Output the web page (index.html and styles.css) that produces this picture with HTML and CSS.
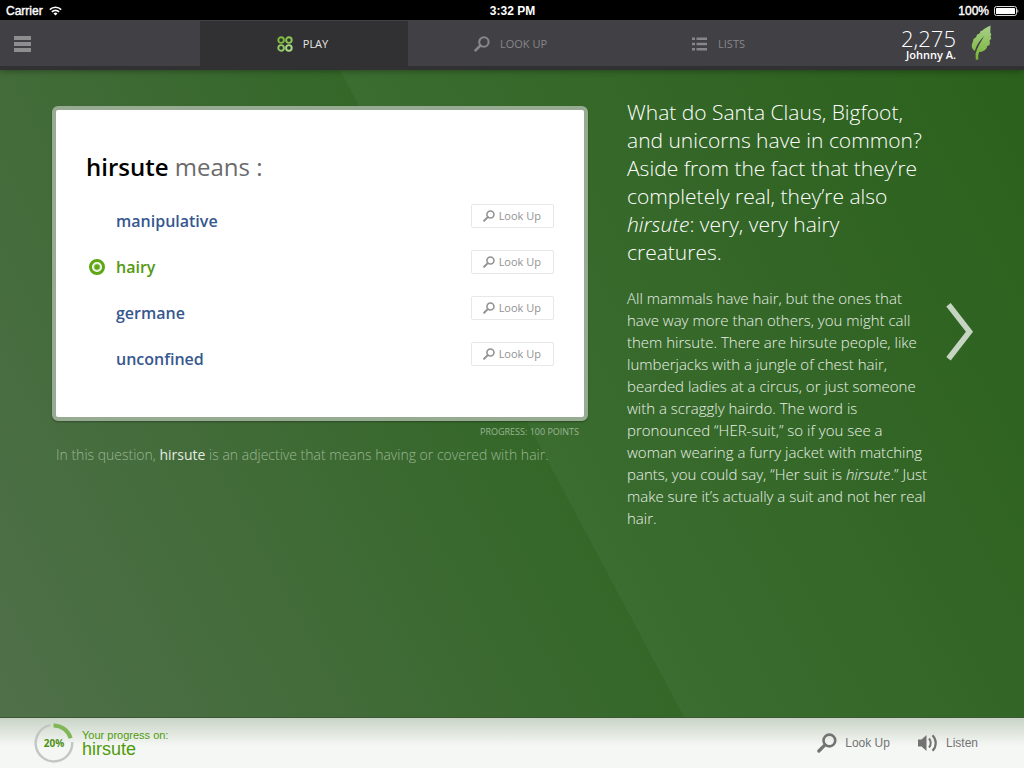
FILE: index.html
```html
<!DOCTYPE html>
<html lang="en">
<head>
<meta charset="utf-8">
<meta name="viewport" content="width=device-width, initial-scale=1">
<title>Vocabulary – hirsute</title>
<link rel="stylesheet" href="styles.css">
</head>
<body>
<svg class="defs" width="0" height="0" aria-hidden="true">
  <symbol id="magnifier" viewBox="0 0 16 16">
    <circle cx="9.9" cy="6" r="4.7" fill="none" stroke="currentColor" stroke-width="2.1"/>
    <path d="M6.4 9.5 1.5 14.4" fill="none" stroke="currentColor" stroke-width="2.6" stroke-linecap="round"/>
  </symbol>
</svg>
<div class="app">
  <div class="status">
    <span class="status-left">Carrier
      <svg width="13" height="10" viewBox="0 0 13 10" fill="none" stroke="#fff" stroke-width="1.6"><path d="M.8 3.6a8.2 8.2 0 0 1 11.4 0M2.9 5.9a5.1 5.1 0 0 1 7.2 0"/><path d="M6.5 9.6 4.5 7.5a2.9 2.9 0 0 1 4 0z" fill="#fff" stroke="none"/></svg>
    </span>
    <span class="status-time">3:32 PM</span>
    <span class="status-right">100%
      <svg width="25" height="10" viewBox="0 0 25 10"><rect x=".5" y=".5" width="22" height="9" rx="2" fill="none" stroke="#ddd"/><rect x="2" y="2" width="19" height="6" rx=".6" fill="#fff"/><path d="M23.4 3.2c1.3.4 1.3 3.2 0 3.6z" fill="#ddd"/></svg>
    </span>
  </div>

  <header class="navbar">
    <button class="menu" type="button" aria-label="Menu">
      <svg width="17" height="16" viewBox="0 0 17 16" fill="#8e8e90"><path d="M0 0h17v4H0zM0 6h17v4H0zM0 12h17v4H0z"/></svg>
    </button>
    <nav class="tabs">
      <a class="tab tab-active" href="#play">
        <svg width="16" height="16" viewBox="0 0 16 16" fill="none" stroke-width="1.9"><circle cx="4.1" cy="4.1" r="2.8" stroke="#7cbc3a"/><circle cx="11.9" cy="4.1" r="2.8" stroke="#8cc653"/><circle cx="4.1" cy="11.9" r="2.8" stroke="#92cb62"/><circle cx="11.9" cy="11.9" r="2.8" stroke="#a9dc80"/></svg>
        Play</a>
      <a class="tab" href="#lookup"><svg width="16" height="16"><use href="#magnifier"/></svg>Look Up</a>
      <a class="tab" href="#lists">
        <svg width="16" height="14" viewBox="0 0 16 14" fill="currentColor"><path d="M0 .5h3v2.6H0zM0 5.7h3v2.6H0zM0 10.9h3v2.6H0zM4.500 .5h10.500v2.600H4.500zM4.500 5.700h10.500v2.600H4.500zM4.500 10.900h10.500v2.600H4.500z"/></svg>
        Lists</a>
    </nav>
    <div class="profile">
      <div class="score"><span class="points">2,275</span><span class="user">Johnny A.</span></div>
      <svg width="21" height="36" viewBox="0 0 21 36">
        <defs><linearGradient id="leaf" x1="0" y1="0" x2="0" y2="1"><stop offset="0" stop-color="#a9cf8d"/><stop offset="1" stop-color="#76b531"/></linearGradient></defs>
        <path fill="url(#leaf)" d="M19.500.5C16 2.200 13 3.500 11 5.800L9.500 6 8.800 8.200 6 9.800 5 12.300 2.500 14 1.800 17C.2 20.500.3 23.500 3.800 26 5.500 20 8.500 15.500 13.200 11 9.700 17.200 6.300 22 4.600 28.500L4.800 34.800 7.400 34.400C7 31.500 7.300 29 8.300 27 11.500 26.800 14.500 25.500 16 22.500L15.700 21.400 18.500 20 19 16.800 18.200 16 20.300 13.500 19.500 11.700 20.300 9.300 19.300 7.600Z"/>
      </svg>
    </div>
  </header>

  <main class="stage">
    <section class="question">
      <form class="card">
        <h1 class="prompt"><strong>hirsute</strong> means :</h1>
        <ul class="choices">
          <li class="choice"><label class="answer"><input class="radio" type="radio" name="answer">manipulative</label><button class="lookup" type="button"><svg width="12" height="12"><use href="#magnifier"/></svg>Look Up</button></li>
          <li class="choice"><label class="answer answer-right"><input class="radio" type="radio" name="answer" checked>hairy</label><button class="lookup" type="button"><svg width="12" height="12"><use href="#magnifier"/></svg>Look Up</button></li>
          <li class="choice"><label class="answer"><input class="radio" type="radio" name="answer">germane</label><button class="lookup" type="button"><svg width="12" height="12"><use href="#magnifier"/></svg>Look Up</button></li>
          <li class="choice"><label class="answer"><input class="radio" type="radio" name="answer">unconfined</label><button class="lookup" type="button"><svg width="12" height="12"><use href="#magnifier"/></svg>Look Up</button></li>
        </ul>
      </form>
      <p class="progress-note">Progress: 100 points</p>
      <p class="explain">In this question, <strong>hirsute</strong> is an adjective that means having or covered with hair.</p>
    </section>

    <article class="blurb">
      <p class="lead">What do Santa Claus, Bigfoot, and unicorns have in common? Aside from the fact that they’re completely real, they’re also <em>hirsute</em>: very, very hairy creatures.</p>
      <p class="detail">All mammals have hair, but the ones that have way more than others, you might call them hirsute. There are hirsute people, like lumberjacks with a jungle of chest hair, bearded ladies at a circus, or just someone with a scraggly hairdo. The word is pronounced “HER-suit,” so if you see a woman wearing a furry jacket with matching pants, you could say, “Her suit is <em>hirsute</em>.” Just make sure it’s actually a suit and not her real hair.</p>
    </article>

    <button class="next" type="button" aria-label="Next question">
      <svg width="28" height="58" viewBox="0 0 28 58"><path d="M2.500 1.700 23.500 28.700 2.500 55.700" fill="none" stroke="#c5d5c1" stroke-width="5.600"/></svg>
    </button>
  </main>

  <footer class="bottom">
    <div class="meter">
      <svg class="ring" width="40" height="40" viewBox="0 0 40 40" fill="none">
        <path d="M38.200 19A18.300 18.300 0 1 1 16.200 2.200" stroke="#c3c6c2" stroke-width="2.400"/>
        <path d="M19.500 2.400A17.700 17.700 0 0 1 36.600 15.200" stroke="#80b656" stroke-width="4"/>
      </svg>
      <span class="percent">20%</span>
    </div>
    <div class="word"><span class="word-label">Your progress on:</span><span class="word-name">hirsute</span></div>
    <div class="actions">
      <button class="action" type="button"><svg width="20" height="20"><use href="#magnifier"/></svg>Look Up</button>
      <button class="action" type="button">
        <svg width="20" height="18" viewBox="0 0 20 18"><path d="M0 5.500h3.500L8.500 1v16L3.500 12.500H0z" fill="currentColor"/><path d="M11 4.500c2.300 2.500 2.300 6.500 0 9" fill="none" stroke="currentColor" stroke-width="2"/><path d="M14.500 1.200c4.300 4.400 4.300 11.200 0 15.600" fill="none" stroke="currentColor" stroke-width="2.200"/></svg>
        Listen</button>
    </div>
  </footer>
</div>
</body>
</html>
```
FILE: styles.css
```css
* { box-sizing: border-box; }

body {
  margin: 0;
  font-family: "Open Sans", "Noto Sans", sans-serif;
}

h1, p, ul { margin: 0; padding: 0; }
ul { list-style: none; }
svg { display: block; flex: none; }
.defs { position: absolute; }

button {
  margin: 0;
  padding: 0;
  border: 0;
  background: none;
  color: inherit;
  font: inherit;
  cursor: pointer;
}

.app {
  display: flex;
  flex-direction: column;
  min-height: 100vh;
}

/* Status bar */
.status {
  display: grid;
  grid-template-columns: 1fr auto 1fr;
  align-items: center;
  height: 20px;
  padding: 2px 5px 0 6px;
  background: #000;
  color: #fff;
  font: bold 12px/18px "Liberation Sans", Arial, sans-serif;
}
.status-left, .status-right {
  display: flex;
  align-items: center;
  gap: 6px;
  font-weight: normal;
  -webkit-text-stroke: 0.4px #fff;
}
.status-right { justify-content: flex-end; gap: 5px; }

/* Navigation */
.navbar {
  display: grid;
  grid-template-columns: 200px 1fr 200px;
  height: 50px;
  border-bottom: 4px solid #313133;
  background: #414045;
  box-shadow: 0 1px 6px rgba(0, 0, 0, 0.35);
  position: relative;
}
.menu {
  justify-self: start;
  padding: 2px 14px 0;
}
.tabs {
  display: grid;
  grid-template-columns: repeat(3, 1fr);
}
.tab {
  display: flex;
  align-items: center;
  justify-content: center;
  gap: 10px;
  padding: 1px 3px 0 0;
  color: #87878a;
  font-size: 11px;
  text-decoration: none;
  text-transform: uppercase;
}
.tab-active {
  background: #313133;
  background-clip: padding-box;
  border-top: 1px solid #414045;
  padding-top: 0;
  color: #e6e6e6;
}
.profile {
  display: flex;
  justify-content: flex-end;
  align-items: center;
  gap: 15px;
  padding-right: 32px;
  color: #fff;
}
.score {
  display: flex;
  flex-direction: column;
  align-items: flex-end;
  padding-top: 1px;
}
.points {
  font-size: 22px;
  font-weight: 300;
  line-height: 22px;
}
.user {
  font-size: 11px;
  font-weight: 600;
  line-height: 12px;
}

/* Main area */
.stage {
  flex: 1;
  display: grid;
  grid-template-columns: minmax(0, 536fr) minmax(0, 300fr) auto;
  column-gap: 39px;
  padding: 28px 50px 28px 52px;
  background: linear-gradient(62deg, #50704a 0%, #346728 50%, #3b6c30 50%, #2b601c 100%);
}
.question { padding-top: 8px; }
.card {
  padding: 37px 30px 36px;
  border: 4px solid #97aa92;
  border-radius: 6px;
  background: #fff;
  box-shadow: 0 1px 2px rgba(0, 0, 0, 0.3);
}
.prompt {
  color: #6b6b6b;
  font-size: 24px;
  font-weight: 400;
  line-height: 40px;
}
.prompt strong { color: #000; font-weight: 600; }
.choices { padding-top: 11px; }
.choice {
  display: flex;
  align-items: flex-start;
  justify-content: space-between;
  height: 46px;
  padding-top: 6px;
}
.choice:last-child { height: 45px; }
.answer {
  display: flex;
  align-items: center;
  gap: 11px;
  padding: 5px 0 0 3px;
  color: #37578f;
  font-size: 16px;
  font-weight: 600;
  line-height: 24px;
}
.answer-right { color: #539911; }
.radio {
  appearance: none;
  width: 16px;
  height: 16px;
  margin: 0;
  border-radius: 50%;
}
.radio:checked {
  border: 3px solid #5fa614;
  background: radial-gradient(circle, #5fa614 0 2px, #fff 4px);
}
.lookup {
  display: flex;
  align-items: center;
  gap: 4px;
  height: 24px;
  padding: 0 12px 1px 11px;
  border: 1px solid #e8e8e8;
  border-radius: 2px;
  color: #929292;
  font-size: 11px;
}
.lookup svg { margin-top: 1px; }
.progress-note {
  padding: 3px 9px 0 0;
  color: #9ab593;
  font-size: 9px;
  line-height: 16px;
  text-align: right;
  text-transform: uppercase;
}
.explain {
  padding: 3px 0 0 4px;
  color: #9ab593;
  font-size: 14px;
  font-weight: 300;
  line-height: 24px;
}
.explain strong { color: #e3ebe1; font-weight: 400; }

.blurb { color: #fff; font-weight: 300; }
.lead { font-size: 21px; line-height: 28px; }
.detail {
  padding-top: 21px;
  color: #e9f0e7;
  font-size: 15px;
  line-height: 22px;
}
.next {
  align-self: start;
  margin: 205px 0 0 -20px;
}

/* Footer */
.bottom {
  display: flex;
  align-items: center;
  height: 51px;
  padding: 0 46px 1px 34px;
  border-top: 1px solid #3a5934;
  background: linear-gradient(#c9d4c6, #f5f7f4 28px);
  font-family: "Liberation Sans", Arial, sans-serif;
}
.meter {
  display: grid;
  place-items: center;
}
.ring, .percent { grid-area: 1 / 1; }
.percent {
  color: #4f9016;
  font: 700 10px/14px "Open Sans", sans-serif;
}
.word {
  display: flex;
  flex-direction: column;
  padding-left: 8px;
  color: #4f9a0b;
}
.word-label { font-size: 11px; line-height: 12px; }
.word-name { font-size: 18px; line-height: 16px; }
.actions {
  display: flex;
  gap: 28px;
  margin-left: auto;
}
.action {
  display: flex;
  align-items: center;
  gap: 8px;
  color: #737373;
  font-size: 12px;
}
```
